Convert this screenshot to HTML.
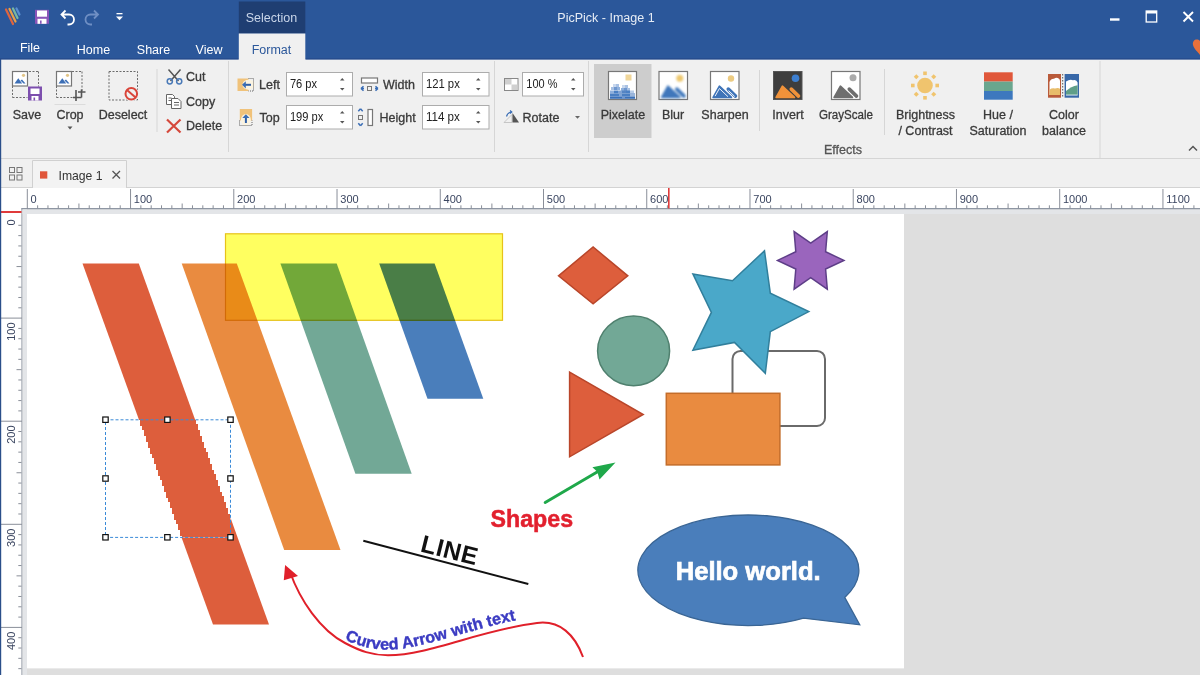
<!DOCTYPE html>
<html><head><meta charset="utf-8">
<style>
html,body{margin:0;padding:0;width:1200px;height:675px;overflow:hidden;background:#f0f0f0;}
svg{position:absolute;left:0;top:0;display:block;}
text{font-family:"Liberation Sans",sans-serif;}
</style></head>
<body>
<svg width="1200" height="675" viewBox="0 0 1200 675">
<!-- title bar -->
<rect x="0" y="0" width="1200" height="59.7" fill="#2b579a"/>
<rect x="0" y="58.3" width="1200" height="1.4" fill="#25498a"/>
<rect x="238.8" y="1.5" width="66.5" height="32" fill="#1f3e72"/>
<rect x="238.8" y="33.5" width="66.5" height="26.5" fill="#f0f0f0"/>
<text x="271.5" y="22" font-size="12.5" fill="#c9d5e9" text-anchor="middle">Selection</text>
<text x="271.5" y="53.5" font-size="12.5" fill="#2b579a" text-anchor="middle">Format</text>
<text x="606" y="21.5" font-size="12.5" fill="#e6ecf5" text-anchor="middle">PicPick - Image 1</text>
<text x="30" y="51.5" font-size="12.5" fill="#ffffff" text-anchor="middle">File</text>
<text x="93.5" y="53.5" font-size="12.5" fill="#ffffff" text-anchor="middle">Home</text>
<text x="153.5" y="53.5" font-size="12.5" fill="#ffffff" text-anchor="middle">Share</text>
<text x="209" y="53.5" font-size="12.5" fill="#ffffff" text-anchor="middle">View</text>
<!-- QAT -->
<g stroke-width="2.2" fill="none" stroke-linecap="round">
 <path d="M6 9.5L13 24" stroke="#e0643e"/>
 <path d="M9.5 9L15.5 21.5" stroke="#e9a048"/>
 <path d="M13 8.5L17.5 18" stroke="#7ab8a0"/>
 <path d="M16.5 8.5L19.5 14.5" stroke="#5a8fd0"/>
</g>
<rect x="35" y="9.8" width="14" height="14" fill="#8a55b8"/>
<rect x="37" y="10.5" width="10" height="6.2" fill="#fff"/>
<rect x="37.5" y="18.8" width="9" height="5" fill="#fff"/>
<rect x="40" y="20.5" width="1.6" height="3.3" fill="#8a55b8"/>
<path d="M61.5 14.5h7.5a5 5 0 0 1 0 10h-1.5M65.5 10.5l-4 4 4 4" stroke="#fff" stroke-width="1.8" fill="none"/>
<path d="M98 14.5h-7.5a5 5 0 0 0 0 10h1.5M94 10.5l4 4-4 4" stroke="#6f8fc4" stroke-width="1.8" fill="none"/>
<rect x="116.5" y="13" width="6" height="1.3" fill="#fff"/>
<path d="M116 16.5h7l-3.5 3.8z" fill="#fff"/>
<!-- window controls -->
<rect x="1110" y="18.3" width="9.5" height="2.4" fill="#fff"/>
<rect x="1146.2" y="11" width="10.5" height="11" fill="none" stroke="#fff" stroke-width="1.3"/>
<rect x="1146" y="11" width="11" height="2.5" fill="#fff"/>
<path d="M1183.5 12l9.5 9.5M1193 12l-9.5 9.5" stroke="#fff" stroke-width="1.9"/>
<path d="M1200 41c-3-3-8-1-7 4c1 4 5 7 7 10z" fill="#e8703a"/>

<!-- ribbon -->
<rect x="0" y="59.7" width="238.8" height="99.3" fill="#f0f0f0"/>
<rect x="305.3" y="59.7" width="894.7" height="99.3" fill="#f0f0f0"/>
<rect x="238.8" y="59" width="66.5" height="100" fill="#f0f0f0"/>
<rect x="0" y="158" width="1200" height="1" fill="#d5d5d5"/>
<!-- ===== RIBBON CONTENT ===== -->
<g id="ribbon">
<!-- separators -->
<rect x="156.5" y="69" width="1" height="63" fill="#d6d6d6"/>
<rect x="228" y="61" width="1" height="91" fill="#d6d6d6"/>
<rect x="494" y="61" width="1" height="91" fill="#d6d6d6"/>
<rect x="588" y="61" width="1" height="91" fill="#d6d6d6"/>
<rect x="759" y="70" width="1" height="61" fill="#d6d6d6"/>
<rect x="884" y="69" width="1" height="66" fill="#d6d6d6"/>
<rect x="1099.5" y="61" width="1" height="97" fill="#d6d6d6"/>

<!-- Save icon -->
<g>
 <path d="M29 71.5h10M38.5 71.5v15M12.5 86v11.5M12.5 97.5h15" stroke="#6b6b6b" stroke-width="1" stroke-dasharray="2 1.5" fill="none"/>
 <rect x="12.5" y="71.5" width="15" height="14.5" fill="#fff" stroke="#777" stroke-width="1.2"/>
 <path d="M14.5 83.5L18.3 78.3L22.2 83.5Z" fill="#3c6fb6"/>
 <path d="M20.5 80.5L22 79.5L25.5 83.5L23.5 83.5Z" fill="#3c6fb6"/>
 <circle cx="23.5" cy="75.3" r="1.6" fill="#e2c588"/>
 <rect x="28" y="86.5" width="14" height="14" fill="#7d4fae"/>
 <rect x="30.5" y="88.5" width="9" height="5.5" fill="#fff"/>
 <rect x="31.5" y="96" width="7" height="4.5" fill="#fff"/>
 <rect x="33.5" y="97.5" width="1.6" height="3" fill="#7d4fae"/>
</g>
<text x="27" y="119" font-size="12.5" fill="#3a3a3a" stroke="#3a3a3a" stroke-width="0.3" text-anchor="middle">Save</text>

<!-- Crop icon -->
<g>
 <path d="M72 71.5h10M82 71.5v20M56.5 86v11.5M56.5 97.5h17" stroke="#6b6b6b" stroke-width="1" stroke-dasharray="2 1.5" fill="none"/>
 <rect x="56.5" y="71.5" width="15" height="14.5" fill="#fff" stroke="#777" stroke-width="1.2"/>
 <path d="M58.5 83.5L62.3 78.3L66.2 83.5Z" fill="#3c6fb6"/>
 <path d="M64.5 80.5L66 79.5L69.5 83.5L67.5 83.5Z" fill="#3c6fb6"/>
 <circle cx="67.5" cy="75.3" r="1.6" fill="#e2c588"/>
 <path d="M76 90v11M73 97.5h8.5M81.5 89.5v8M78 92h7.5" stroke="#555" stroke-width="1.6" fill="none"/>
</g>
<rect x="54.5" y="104" width="31" height="1" fill="#dcdcdc"/>
<text x="70" y="119" font-size="12.5" fill="#3a3a3a" stroke="#3a3a3a" stroke-width="0.3" text-anchor="middle">Crop</text>
<path d="M67.5 126.5h5l-2.5 3z" fill="#555"/>

<!-- Deselect icon -->
<g>
 <rect x="109" y="71.5" width="28.5" height="28.5" fill="none" stroke="#6b6b6b" stroke-width="1" stroke-dasharray="2 1.5"/>
 <circle cx="131.3" cy="93.8" r="7.5" fill="#f0f0f0"/>
 <circle cx="131.3" cy="93.8" r="5.8" fill="none" stroke="#d9453a" stroke-width="2"/>
 <path d="M127 90l8.6 7.6" stroke="#d9453a" stroke-width="2"/>
</g>
<text x="123" y="119" font-size="12.5" fill="#3a3a3a" stroke="#3a3a3a" stroke-width="0.3" text-anchor="middle">Deselect</text>

<!-- Cut / Copy / Delete -->
<g>
 <path d="M168.5 69.5L178.5 81M180.5 69.5L170.5 81" stroke="#555" stroke-width="1.5"/>
 <circle cx="169.8" cy="81.3" r="2.6" fill="none" stroke="#4a7ab8" stroke-width="1.5"/>
 <circle cx="179.2" cy="81.3" r="2.6" fill="none" stroke="#4a7ab8" stroke-width="1.5"/>
</g>
<text x="186" y="81" font-size="12.5" fill="#3a3a3a" stroke="#3a3a3a" stroke-width="0.3">Cut</text>
<g fill="#fff" stroke="#666" stroke-width="1">
 <path d="M166.5 94.5h6l2 2v8h-8z"/>
 <path d="M171.5 98.5h6.5l3 3v7h-9.5z"/>
 <path d="M168.5 98h3M168.5 100.5h3M174 102.5h5M174 105h5" stroke="#666"/>
</g>
<text x="186" y="105.5" font-size="12.5" fill="#3a3a3a" stroke="#3a3a3a" stroke-width="0.3">Copy</text>
<path d="M167 119.5L180.5 132.5M180.5 119.5L167 132.5" stroke="#d5483b" stroke-width="2.2"/>
<text x="186" y="130" font-size="12.5" fill="#3a3a3a" stroke="#3a3a3a" stroke-width="0.3">Delete</text>

<!-- Left / Top -->
<g>
 <rect x="237.5" y="78.5" width="11" height="12.5" fill="#f0c27a"/>
 <ellipse cx="248.5" cy="84.7" rx="6" ry="5" fill="#fbf3e0"/>
 <path d="M248.5 78.5h5v12.5h-5" fill="none" stroke="#555" stroke-width="0.9" stroke-dasharray="1 1"/>
 <path d="M244 84.8h7" stroke="#2f5fa8" stroke-width="2"/>
 <path d="M242 84.8l3.8-3.6v7.2z" fill="#3a6db5"/>
</g>
<text x="259" y="89" font-size="12.5" fill="#3a3a3a" stroke="#3a3a3a" stroke-width="0.3">Left</text>
<g>
 <rect x="239.8" y="109" width="12.3" height="11.5" fill="#f0c27a"/>
 <ellipse cx="245.9" cy="120" rx="5" ry="6" fill="#fbf3e0"/>
 <path d="M239.5 120.5v5h12.5v-5" fill="none" stroke="#555" stroke-width="0.9" stroke-dasharray="1 1"/>
 <path d="M245.9 116.5v6.5" stroke="#2f5fa8" stroke-width="2"/>
 <path d="M245.9 114.2l3.6 3.8h-7.2z" fill="#3a6db5"/>
</g>
<text x="259.5" y="121.5" font-size="12.5" fill="#3a3a3a" stroke="#3a3a3a" stroke-width="0.3">Top</text>

<!-- Input boxes -->
<g fill="#fff" stroke="#acacac" stroke-width="1">
 <rect x="286.5" y="72.5" width="66" height="23.5"/>
 <rect x="286.5" y="105.5" width="66" height="23.5"/>
 <rect x="422.5" y="72.5" width="66.5" height="23.5"/>
 <rect x="422.5" y="105.5" width="66.5" height="23.5"/>
 <rect x="522.5" y="72.5" width="61" height="23.5"/>
</g>
<g font-size="13.5" fill="#222">
 <text x="289.9" y="88" textLength="27.2" lengthAdjust="spacingAndGlyphs">76 px</text>
 <text x="289.9" y="120.8" textLength="33.4" lengthAdjust="spacingAndGlyphs">199 px</text>
 <text x="425.9" y="88" textLength="33.9" lengthAdjust="spacingAndGlyphs">121 px</text>
 <text x="425.9" y="120.8" textLength="33.9" lengthAdjust="spacingAndGlyphs">114 px</text>
 <text x="526.3" y="88" textLength="31.1" lengthAdjust="spacingAndGlyphs">100 %</text>
</g>
<g fill="#555">
 <path d="M340 80.5h4.5l-2.25-2.5z"/><path d="M340 88h4.5l-2.25 2.5z"/>
 <path d="M340 113.5h4.5l-2.25-2.5z"/><path d="M340 121h4.5l-2.25 2.5z"/>
 <path d="M476 80.5h4.5l-2.25-2.5z"/><path d="M476 88h4.5l-2.25 2.5z"/>
 <path d="M476 113.5h4.5l-2.25-2.5z"/><path d="M476 121h4.5l-2.25 2.5z"/>
 <path d="M571 80.5h4.5l-2.25-2.5z"/><path d="M571 88h4.5l-2.25 2.5z"/>
</g>

<!-- Width / Height icons -->
<g>
 <rect x="361.5" y="78" width="16" height="5" fill="#fff" stroke="#777" stroke-width="1.2"/>
 <path d="M361 88.5l2.5-2.2M361 88.5l2.5 2.2M361 88.5h3M378 88.5l-2.5-2.2M378 88.5l-2.5 2.2M378 88.5h-3" stroke="#3a6db5" stroke-width="1.5" fill="none"/>
 <rect x="367.5" y="86.5" width="4" height="4" fill="none" stroke="#777" stroke-width="1"/>
</g>
<text x="383" y="89" font-size="12.5" fill="#3a3a3a" stroke="#3a3a3a" stroke-width="0.3">Width</text>
<g>
 <rect x="368" y="109.5" width="4.5" height="16" fill="#fff" stroke="#777" stroke-width="1.2"/>
 <path d="M360.5 108.8l-2.2 2.5M360.5 108.8l2.2 2.5M360.5 125.8l-2.2-2.5M360.5 125.8l2.2-2.5" stroke="#3a6db5" stroke-width="1.5" fill="none"/>
 <rect x="358.5" y="115.5" width="4" height="4" fill="none" stroke="#777" stroke-width="1"/>
</g>
<text x="379.5" y="122" font-size="12.5" fill="#3a3a3a" stroke="#3a3a3a" stroke-width="0.3">Height</text>

<!-- Zoom / Rotate -->
<g>
 <rect x="504.5" y="78.5" width="13.5" height="12" fill="#fff" stroke="#888" stroke-width="1"/>
 <rect x="505" y="79" width="6.5" height="5.5" fill="#d0d0d0"/>
 <rect x="511.5" y="84.5" width="6" height="5.5" fill="#d0d0d0"/>
</g>
<g>
 <path d="M504 122.5L512 114.5V122.5Z" fill="none" stroke="#bbb" stroke-width="0.8"/>
 <path d="M512.5 122.5L512.5 113L519 122.5Z" fill="#555"/>
 <path d="M506.5 116.5q1-4 5-4.5M510 110.5l1.8 1.5-1.8 1.5" stroke="#3a6db5" stroke-width="1.2" fill="none"/>
</g>
<text x="522.5" y="122" font-size="12.5" fill="#3a3a3a" stroke="#3a3a3a" stroke-width="0.3">Rotate</text>
<path d="M575 116h5l-2.5 2.8z" fill="#666"/>

<!-- Pixelate highlight -->
<rect x="594" y="64" width="57.5" height="74" fill="#cdcdcd"/>
</g>
<rect x="608.5" y="71.5" width="28" height="28" fill="#fff" stroke="#777" stroke-width="1.2"/>
<rect x="625.5" y="74.5" width="6" height="6" fill="#f0d69a"/>
<rect x="613" y="84" width="3" height="3" fill="#c9d8ee"/>
<rect x="616" y="84" width="3" height="3" fill="#a9c1e3"/>
<rect x="622" y="85" width="3" height="3" fill="#c9d8ee"/>
<rect x="625" y="85" width="3" height="3" fill="#a9c1e3"/>
<rect x="611" y="87" width="3" height="3" fill="#a9c1e3"/>
<rect x="614" y="87" width="3" height="3" fill="#6f97cf"/>
<rect x="617" y="87" width="3" height="3" fill="#8fb0dc"/>
<rect x="621" y="88" width="3" height="3" fill="#8fb0dc"/>
<rect x="624" y="88" width="3" height="3" fill="#6f97cf"/>
<rect x="627" y="88" width="3" height="3" fill="#a9c1e3"/>
<rect x="610" y="90.5" width="4" height="3" fill="#8fb0dc"/>
<rect x="614" y="90.5" width="4" height="3" fill="#4a80c4"/>
<rect x="618" y="90.5" width="4" height="3" fill="#7fa3d4"/>
<rect x="622" y="90.5" width="4" height="3" fill="#5585c4"/>
<rect x="626" y="90.5" width="4" height="3" fill="#4a80c4"/>
<rect x="630" y="90.5" width="4" height="3" fill="#b7cce8"/>
<rect x="610" y="93.5" width="25" height="3" fill="#4a7fc2"/>
<rect x="610" y="96.5" width="25" height="2.3" fill="#3a70b8"/>
<rect x="619" y="93.5" width="3" height="3" fill="#7fa3d4"/>
<rect x="630" y="93.5" width="5" height="3" fill="#9bb6da"/>
<rect x="622" y="96.5" width="3" height="2.3" fill="#6f97cf"/>
<text x="623" y="119" font-size="12.5" fill="#3a3a3a" stroke="#3a3a3a" stroke-width="0.3" text-anchor="middle">Pixelate</text>
<defs><filter id="bl" x="-30%" y="-30%" width="160%" height="160%"><feGaussianBlur stdDeviation="1"/></filter></defs>
<rect x="659" y="71.5" width="28.5" height="28" fill="#fff" stroke="#777" stroke-width="1.2"/>
<g filter="url(#bl)"><circle cx="679.8" cy="78.3" r="3.5" fill="#edc870"/><path d="M661.6 97.4L667.9 86.1L680.0 97.4Z" fill="#3f77bb" stroke="#3f77bb" stroke-width="1.6" stroke-linejoin="round"/><path d="M676.8 89.1L684.0 96.1" stroke="#3f77bb" stroke-width="3.6" stroke-linecap="round"/></g>
<text x="673" y="119" font-size="12.5" fill="#3a3a3a" stroke="#3a3a3a" stroke-width="0.3" text-anchor="middle">Blur</text>
<rect x="710.5" y="71.5" width="28.5" height="28" fill="#fff" stroke="#777" stroke-width="1.2"/>
<circle cx="731.0" cy="78.5" r="3.2" fill="#eccb82"/>
<path d="M713.1 97.4L719.4 86.1L731.5 97.4Z" fill="#3f74b8" stroke="#3f74b8" stroke-width="1.6" stroke-linejoin="round"/><path d="M728.3 89.1L735.5 96.1" stroke="#3f74b8" stroke-width="3.6" stroke-linecap="round"/>
<path d="M715.1 96.1L719.4 88.5L728.0 96.7" fill="none" stroke="#fff" stroke-width="0.9"/>
<path d="M728.5 90.5L734.7 96.5" fill="none" stroke="#fff" stroke-width="0.9"/>
<text x="725" y="119" font-size="12.5" fill="#3a3a3a" stroke="#3a3a3a" stroke-width="0.3" text-anchor="middle">Sharpen</text>
<rect x="773.5" y="71.5" width="28.5" height="28" fill="#3e3e3e" stroke="#555" stroke-width="1"/>
<circle cx="795.5" cy="78.3" r="3.8" fill="#3d7fd0"/>
<path d="M791.3 89.1L798.5 96.1" stroke="#f0923a" stroke-width="3.6" stroke-linecap="round"/><path d="M776.1 97.4L782.4 86.1L794.5 97.4Z" fill="#f0923a" stroke="#f0923a" stroke-width="1.6" stroke-linejoin="round"/>
<text x="788" y="119" font-size="12.5" fill="#3a3a3a" stroke="#3a3a3a" stroke-width="0.3" text-anchor="middle">Invert</text>
<rect x="831.5" y="71.5" width="28.5" height="28" fill="#fff" stroke="#777" stroke-width="1.2"/>
<circle cx="853.0" cy="77.8" r="3.5" fill="#aaa"/>
<path d="M834.1 97.4L840.4 86.1L852.5 97.4Z" fill="#6e6e6e" stroke="#6e6e6e" stroke-width="1.6" stroke-linejoin="round"/><path d="M849.3 89.1L856.5 96.1" stroke="#6e6e6e" stroke-width="3.6" stroke-linecap="round"/>
<text x="846" y="119" font-size="12.5" fill="#3a3a3a" stroke="#3a3a3a" stroke-width="0.3" text-anchor="middle" textLength="54" lengthAdjust="spacingAndGlyphs">GrayScale</text>
<text x="843" y="153.5" font-size="12.5" fill="#555" stroke="#555" stroke-width="0.3" text-anchor="middle">Effects</text>
<!-- Brightness -->
<g fill="#f0c46e">
 <circle cx="925" cy="85.5" r="7.8"/>
 <rect x="923.2" y="71.5" width="3.6" height="3.6"/>
 <rect x="923.2" y="96" width="3.6" height="3.6"/>
 <rect x="911" y="83.7" width="3.6" height="3.6"/>
 <rect x="935.4" y="83.7" width="3.6" height="3.6"/>
 <rect x="914.5" y="75" width="3.6" height="3.6" transform="rotate(45 916.3 76.8)"/>
 <rect x="931.9" y="75" width="3.6" height="3.6" transform="rotate(45 933.7 76.8)"/>
 <rect x="914.5" y="92.4" width="3.6" height="3.6" transform="rotate(45 916.3 94.2)"/>
 <rect x="931.9" y="92.4" width="3.6" height="3.6" transform="rotate(45 933.7 94.2)"/>
</g>
<text x="925.5" y="119" font-size="12.5" fill="#3a3a3a" stroke="#3a3a3a" stroke-width="0.3" text-anchor="middle">Brightness</text>
<text x="925.5" y="134.5" font-size="12.5" fill="#3a3a3a" stroke="#3a3a3a" stroke-width="0.3" text-anchor="middle">/ Contrast</text>

<!-- Hue -->
<rect x="984" y="72.3" width="28.7" height="9.3" fill="#e0573a"/>
<rect x="984" y="81.6" width="28.7" height="9.4" fill="#6aa68e"/>
<rect x="984" y="91" width="28.7" height="8.7" fill="#3d78be"/>
<text x="998" y="119" font-size="12.5" fill="#3a3a3a" stroke="#3a3a3a" stroke-width="0.3" text-anchor="middle">Hue /</text>
<text x="998" y="134.5" font-size="12.5" fill="#3a3a3a" stroke="#3a3a3a" stroke-width="0.3" text-anchor="middle">Saturation</text>

<!-- Color balance -->
<g>
 <rect x="1048" y="74" width="13" height="23.7" fill="#b95a3a"/>
 <path d="M1049.5 95V82Q1051 78.5 1054 78.8Q1056.5 76.5 1059 78.8Q1060 79.5 1060 81V95Z" fill="#fff"/>
 <path d="M1049.5 95V89.8Q1052 87.8 1055 88.6Q1058 87.2 1060 88.8V95Z" fill="#e8bc6a"/>
 <rect x="1064.6" y="74" width="14.4" height="23.7" fill="#3868a8"/>
 <path d="M1066 95V81.5Q1070 78.8 1073 80.2Q1076.5 79.2 1077.6 82.5V95Z" fill="#fff"/>
 <path d="M1066 95V91Q1071 86.2 1077.6 85.2V95Z" fill="#5f9e88"/>
 <rect x="1066" y="94.6" width="11.6" height="0.9" fill="#e8f2f8"/>
 <path d="M1062.7 74v24" stroke="#555" stroke-width="1" stroke-dasharray="1.5 1.5"/>
</g>
<text x="1064" y="119" font-size="12.5" fill="#3a3a3a" stroke="#3a3a3a" stroke-width="0.3" text-anchor="middle">Color</text>
<text x="1064" y="134.5" font-size="12.5" fill="#3a3a3a" stroke="#3a3a3a" stroke-width="0.3" text-anchor="middle">balance</text>

<!-- collapse chevron -->
<path d="M1189 150.5l4-4 4 4" stroke="#555" stroke-width="1.5" fill="none"/>
<!-- tab bar -->
<rect x="0" y="159" width="1200" height="29" fill="#f0f0f0"/>
<rect x="0" y="187" width="1200" height="1" fill="#d3d3d3"/>
<g fill="none" stroke="#777" stroke-width="1">
 <rect x="9.5" y="167.5" width="5" height="5"/>
 <rect x="17" y="167.5" width="5" height="5"/>
 <rect x="9.5" y="175" width="5" height="5"/>
 <rect x="17" y="175" width="5" height="5"/>
</g>
<path d="M32.5 188V160.5H126.5V188" fill="#f3f3f3" stroke="#d0d0d0" stroke-width="1"/>
<rect x="40" y="171.3" width="7.3" height="7.3" fill="#e0553a"/>
<text x="58.5" y="180" font-size="12.2" fill="#333">Image 1</text>
<path d="M112.5 171l7.5 7.5M120 171l-7.5 7.5" stroke="#555" stroke-width="1.3"/>

<!-- rulers -->
<rect x="0" y="188" width="1200" height="20.5" fill="#ffffff"/>
<rect x="0" y="208.5" width="1200" height="466.5" fill="#dedede"/>
<rect x="1" y="188" width="20.5" height="487" fill="#ffffff"/>
<rect x="21.5" y="208" width="1178.5" height="1.5" fill="#8e96a3"/>
<rect x="21.5" y="208" width="1" height="467" fill="#8e96a3"/>
<rect x="22.5" y="209.5" width="1177.5" height="4.5" fill="#e3e5e8"/>
<rect x="22.5" y="209.5" width="4.5" height="466" fill="#e3e5e8"/>
<rect x="26.80" y="189" width="1" height="20" fill="#8a8f99"/>
<text x="30.60" y="203.3" font-size="11" fill="#3a4560">0</text>
<rect x="37.12" y="205.3" width="1" height="3.2" fill="#8a8f99"/>
<rect x="47.45" y="205.3" width="1" height="3.2" fill="#8a8f99"/>
<rect x="57.77" y="205.3" width="1" height="3.2" fill="#8a8f99"/>
<rect x="68.10" y="205.3" width="1" height="3.2" fill="#8a8f99"/>
<rect x="78.42" y="203.5" width="1" height="5" fill="#8a8f99"/>
<rect x="88.74" y="205.3" width="1" height="3.2" fill="#8a8f99"/>
<rect x="99.07" y="205.3" width="1" height="3.2" fill="#8a8f99"/>
<rect x="109.39" y="205.3" width="1" height="3.2" fill="#8a8f99"/>
<rect x="119.72" y="205.3" width="1" height="3.2" fill="#8a8f99"/>
<rect x="130.04" y="189" width="1" height="20" fill="#8a8f99"/>
<text x="133.84" y="203.3" font-size="11" fill="#3a4560">100</text>
<rect x="140.36" y="205.3" width="1" height="3.2" fill="#8a8f99"/>
<rect x="150.69" y="205.3" width="1" height="3.2" fill="#8a8f99"/>
<rect x="161.01" y="205.3" width="1" height="3.2" fill="#8a8f99"/>
<rect x="171.34" y="205.3" width="1" height="3.2" fill="#8a8f99"/>
<rect x="181.66" y="203.5" width="1" height="5" fill="#8a8f99"/>
<rect x="191.98" y="205.3" width="1" height="3.2" fill="#8a8f99"/>
<rect x="202.31" y="205.3" width="1" height="3.2" fill="#8a8f99"/>
<rect x="212.63" y="205.3" width="1" height="3.2" fill="#8a8f99"/>
<rect x="222.96" y="205.3" width="1" height="3.2" fill="#8a8f99"/>
<rect x="233.28" y="189" width="1" height="20" fill="#8a8f99"/>
<text x="237.08" y="203.3" font-size="11" fill="#3a4560">200</text>
<rect x="243.60" y="205.3" width="1" height="3.2" fill="#8a8f99"/>
<rect x="253.93" y="205.3" width="1" height="3.2" fill="#8a8f99"/>
<rect x="264.25" y="205.3" width="1" height="3.2" fill="#8a8f99"/>
<rect x="274.58" y="205.3" width="1" height="3.2" fill="#8a8f99"/>
<rect x="284.90" y="203.5" width="1" height="5" fill="#8a8f99"/>
<rect x="295.22" y="205.3" width="1" height="3.2" fill="#8a8f99"/>
<rect x="305.55" y="205.3" width="1" height="3.2" fill="#8a8f99"/>
<rect x="315.87" y="205.3" width="1" height="3.2" fill="#8a8f99"/>
<rect x="326.20" y="205.3" width="1" height="3.2" fill="#8a8f99"/>
<rect x="336.52" y="189" width="1" height="20" fill="#8a8f99"/>
<text x="340.32" y="203.3" font-size="11" fill="#3a4560">300</text>
<rect x="346.84" y="205.3" width="1" height="3.2" fill="#8a8f99"/>
<rect x="357.17" y="205.3" width="1" height="3.2" fill="#8a8f99"/>
<rect x="367.49" y="205.3" width="1" height="3.2" fill="#8a8f99"/>
<rect x="377.82" y="205.3" width="1" height="3.2" fill="#8a8f99"/>
<rect x="388.14" y="203.5" width="1" height="5" fill="#8a8f99"/>
<rect x="398.46" y="205.3" width="1" height="3.2" fill="#8a8f99"/>
<rect x="408.79" y="205.3" width="1" height="3.2" fill="#8a8f99"/>
<rect x="419.11" y="205.3" width="1" height="3.2" fill="#8a8f99"/>
<rect x="429.44" y="205.3" width="1" height="3.2" fill="#8a8f99"/>
<rect x="439.76" y="189" width="1" height="20" fill="#8a8f99"/>
<text x="443.56" y="203.3" font-size="11" fill="#3a4560">400</text>
<rect x="450.08" y="205.3" width="1" height="3.2" fill="#8a8f99"/>
<rect x="460.41" y="205.3" width="1" height="3.2" fill="#8a8f99"/>
<rect x="470.73" y="205.3" width="1" height="3.2" fill="#8a8f99"/>
<rect x="481.06" y="205.3" width="1" height="3.2" fill="#8a8f99"/>
<rect x="491.38" y="203.5" width="1" height="5" fill="#8a8f99"/>
<rect x="501.70" y="205.3" width="1" height="3.2" fill="#8a8f99"/>
<rect x="512.03" y="205.3" width="1" height="3.2" fill="#8a8f99"/>
<rect x="522.35" y="205.3" width="1" height="3.2" fill="#8a8f99"/>
<rect x="532.68" y="205.3" width="1" height="3.2" fill="#8a8f99"/>
<rect x="543.00" y="189" width="1" height="20" fill="#8a8f99"/>
<text x="546.80" y="203.3" font-size="11" fill="#3a4560">500</text>
<rect x="553.32" y="205.3" width="1" height="3.2" fill="#8a8f99"/>
<rect x="563.65" y="205.3" width="1" height="3.2" fill="#8a8f99"/>
<rect x="573.97" y="205.3" width="1" height="3.2" fill="#8a8f99"/>
<rect x="584.30" y="205.3" width="1" height="3.2" fill="#8a8f99"/>
<rect x="594.62" y="203.5" width="1" height="5" fill="#8a8f99"/>
<rect x="604.94" y="205.3" width="1" height="3.2" fill="#8a8f99"/>
<rect x="615.27" y="205.3" width="1" height="3.2" fill="#8a8f99"/>
<rect x="625.59" y="205.3" width="1" height="3.2" fill="#8a8f99"/>
<rect x="635.92" y="205.3" width="1" height="3.2" fill="#8a8f99"/>
<rect x="646.24" y="189" width="1" height="20" fill="#8a8f99"/>
<text x="650.04" y="203.3" font-size="11" fill="#3a4560">600</text>
<rect x="656.56" y="205.3" width="1" height="3.2" fill="#8a8f99"/>
<rect x="666.89" y="205.3" width="1" height="3.2" fill="#8a8f99"/>
<rect x="677.21" y="205.3" width="1" height="3.2" fill="#8a8f99"/>
<rect x="687.54" y="205.3" width="1" height="3.2" fill="#8a8f99"/>
<rect x="697.86" y="203.5" width="1" height="5" fill="#8a8f99"/>
<rect x="708.18" y="205.3" width="1" height="3.2" fill="#8a8f99"/>
<rect x="718.51" y="205.3" width="1" height="3.2" fill="#8a8f99"/>
<rect x="728.83" y="205.3" width="1" height="3.2" fill="#8a8f99"/>
<rect x="739.16" y="205.3" width="1" height="3.2" fill="#8a8f99"/>
<rect x="749.48" y="189" width="1" height="20" fill="#8a8f99"/>
<text x="753.28" y="203.3" font-size="11" fill="#3a4560">700</text>
<rect x="759.80" y="205.3" width="1" height="3.2" fill="#8a8f99"/>
<rect x="770.13" y="205.3" width="1" height="3.2" fill="#8a8f99"/>
<rect x="780.45" y="205.3" width="1" height="3.2" fill="#8a8f99"/>
<rect x="790.78" y="205.3" width="1" height="3.2" fill="#8a8f99"/>
<rect x="801.10" y="203.5" width="1" height="5" fill="#8a8f99"/>
<rect x="811.42" y="205.3" width="1" height="3.2" fill="#8a8f99"/>
<rect x="821.75" y="205.3" width="1" height="3.2" fill="#8a8f99"/>
<rect x="832.07" y="205.3" width="1" height="3.2" fill="#8a8f99"/>
<rect x="842.40" y="205.3" width="1" height="3.2" fill="#8a8f99"/>
<rect x="852.72" y="189" width="1" height="20" fill="#8a8f99"/>
<text x="856.52" y="203.3" font-size="11" fill="#3a4560">800</text>
<rect x="863.04" y="205.3" width="1" height="3.2" fill="#8a8f99"/>
<rect x="873.37" y="205.3" width="1" height="3.2" fill="#8a8f99"/>
<rect x="883.69" y="205.3" width="1" height="3.2" fill="#8a8f99"/>
<rect x="894.02" y="205.3" width="1" height="3.2" fill="#8a8f99"/>
<rect x="904.34" y="203.5" width="1" height="5" fill="#8a8f99"/>
<rect x="914.66" y="205.3" width="1" height="3.2" fill="#8a8f99"/>
<rect x="924.99" y="205.3" width="1" height="3.2" fill="#8a8f99"/>
<rect x="935.31" y="205.3" width="1" height="3.2" fill="#8a8f99"/>
<rect x="945.64" y="205.3" width="1" height="3.2" fill="#8a8f99"/>
<rect x="955.96" y="189" width="1" height="20" fill="#8a8f99"/>
<text x="959.76" y="203.3" font-size="11" fill="#3a4560">900</text>
<rect x="966.28" y="205.3" width="1" height="3.2" fill="#8a8f99"/>
<rect x="976.61" y="205.3" width="1" height="3.2" fill="#8a8f99"/>
<rect x="986.93" y="205.3" width="1" height="3.2" fill="#8a8f99"/>
<rect x="997.26" y="205.3" width="1" height="3.2" fill="#8a8f99"/>
<rect x="1007.58" y="203.5" width="1" height="5" fill="#8a8f99"/>
<rect x="1017.90" y="205.3" width="1" height="3.2" fill="#8a8f99"/>
<rect x="1028.23" y="205.3" width="1" height="3.2" fill="#8a8f99"/>
<rect x="1038.55" y="205.3" width="1" height="3.2" fill="#8a8f99"/>
<rect x="1048.88" y="205.3" width="1" height="3.2" fill="#8a8f99"/>
<rect x="1059.20" y="189" width="1" height="20" fill="#8a8f99"/>
<text x="1063.00" y="203.3" font-size="11" fill="#3a4560">1000</text>
<rect x="1069.52" y="205.3" width="1" height="3.2" fill="#8a8f99"/>
<rect x="1079.85" y="205.3" width="1" height="3.2" fill="#8a8f99"/>
<rect x="1090.17" y="205.3" width="1" height="3.2" fill="#8a8f99"/>
<rect x="1100.50" y="205.3" width="1" height="3.2" fill="#8a8f99"/>
<rect x="1110.82" y="203.5" width="1" height="5" fill="#8a8f99"/>
<rect x="1121.14" y="205.3" width="1" height="3.2" fill="#8a8f99"/>
<rect x="1131.47" y="205.3" width="1" height="3.2" fill="#8a8f99"/>
<rect x="1141.79" y="205.3" width="1" height="3.2" fill="#8a8f99"/>
<rect x="1152.12" y="205.3" width="1" height="3.2" fill="#8a8f99"/>
<rect x="1162.44" y="189" width="1" height="20" fill="#8a8f99"/>
<text x="1166.24" y="203.3" font-size="11" fill="#3a4560">1100</text>
<rect x="1172.76" y="205.3" width="1" height="3.2" fill="#8a8f99"/>
<rect x="1183.09" y="205.3" width="1" height="3.2" fill="#8a8f99"/>
<rect x="1193.41" y="205.3" width="1" height="3.2" fill="#8a8f99"/>
<text transform="translate(14.8 219.30) rotate(-90)" text-anchor="end" font-size="11" fill="#3a4560">0</text>
<rect x="18.3" y="224.81" width="3.2" height="1" fill="#8a8f99"/>
<rect x="18.3" y="235.12" width="3.2" height="1" fill="#8a8f99"/>
<rect x="18.3" y="245.43" width="3.2" height="1" fill="#8a8f99"/>
<rect x="18.3" y="255.74" width="3.2" height="1" fill="#8a8f99"/>
<rect x="16.5" y="266.05" width="5" height="1" fill="#8a8f99"/>
<rect x="18.3" y="276.36" width="3.2" height="1" fill="#8a8f99"/>
<rect x="18.3" y="286.67" width="3.2" height="1" fill="#8a8f99"/>
<rect x="18.3" y="296.98" width="3.2" height="1" fill="#8a8f99"/>
<rect x="18.3" y="307.29" width="3.2" height="1" fill="#8a8f99"/>
<rect x="1" y="317.60" width="21" height="1" fill="#8a8f99"/>
<text transform="translate(14.8 322.40) rotate(-90)" text-anchor="end" font-size="11" fill="#3a4560">100</text>
<rect x="18.3" y="327.91" width="3.2" height="1" fill="#8a8f99"/>
<rect x="18.3" y="338.22" width="3.2" height="1" fill="#8a8f99"/>
<rect x="18.3" y="348.53" width="3.2" height="1" fill="#8a8f99"/>
<rect x="18.3" y="358.84" width="3.2" height="1" fill="#8a8f99"/>
<rect x="16.5" y="369.15" width="5" height="1" fill="#8a8f99"/>
<rect x="18.3" y="379.46" width="3.2" height="1" fill="#8a8f99"/>
<rect x="18.3" y="389.77" width="3.2" height="1" fill="#8a8f99"/>
<rect x="18.3" y="400.08" width="3.2" height="1" fill="#8a8f99"/>
<rect x="18.3" y="410.39" width="3.2" height="1" fill="#8a8f99"/>
<rect x="1" y="420.70" width="21" height="1" fill="#8a8f99"/>
<text transform="translate(14.8 425.50) rotate(-90)" text-anchor="end" font-size="11" fill="#3a4560">200</text>
<rect x="18.3" y="431.01" width="3.2" height="1" fill="#8a8f99"/>
<rect x="18.3" y="441.32" width="3.2" height="1" fill="#8a8f99"/>
<rect x="18.3" y="451.63" width="3.2" height="1" fill="#8a8f99"/>
<rect x="18.3" y="461.94" width="3.2" height="1" fill="#8a8f99"/>
<rect x="16.5" y="472.25" width="5" height="1" fill="#8a8f99"/>
<rect x="18.3" y="482.56" width="3.2" height="1" fill="#8a8f99"/>
<rect x="18.3" y="492.87" width="3.2" height="1" fill="#8a8f99"/>
<rect x="18.3" y="503.18" width="3.2" height="1" fill="#8a8f99"/>
<rect x="18.3" y="513.49" width="3.2" height="1" fill="#8a8f99"/>
<rect x="1" y="523.80" width="21" height="1" fill="#8a8f99"/>
<text transform="translate(14.8 528.60) rotate(-90)" text-anchor="end" font-size="11" fill="#3a4560">300</text>
<rect x="18.3" y="534.11" width="3.2" height="1" fill="#8a8f99"/>
<rect x="18.3" y="544.42" width="3.2" height="1" fill="#8a8f99"/>
<rect x="18.3" y="554.73" width="3.2" height="1" fill="#8a8f99"/>
<rect x="18.3" y="565.04" width="3.2" height="1" fill="#8a8f99"/>
<rect x="16.5" y="575.35" width="5" height="1" fill="#8a8f99"/>
<rect x="18.3" y="585.66" width="3.2" height="1" fill="#8a8f99"/>
<rect x="18.3" y="595.97" width="3.2" height="1" fill="#8a8f99"/>
<rect x="18.3" y="606.28" width="3.2" height="1" fill="#8a8f99"/>
<rect x="18.3" y="616.59" width="3.2" height="1" fill="#8a8f99"/>
<rect x="1" y="626.90" width="21" height="1" fill="#8a8f99"/>
<text transform="translate(14.8 631.70) rotate(-90)" text-anchor="end" font-size="11" fill="#3a4560">400</text>
<rect x="18.3" y="637.21" width="3.2" height="1" fill="#8a8f99"/>
<rect x="18.3" y="647.52" width="3.2" height="1" fill="#8a8f99"/>
<rect x="18.3" y="657.83" width="3.2" height="1" fill="#8a8f99"/>
<rect x="18.3" y="668.14" width="3.2" height="1" fill="#8a8f99"/><!-- canvas -->
<rect x="27" y="214" width="877" height="454.6" fill="#ffffff"/>
<rect x="904" y="214" width="296" height="461" fill="#dedede"/>
<rect x="27" y="668.6" width="877" height="7" fill="#dedede"/>
<rect x="668" y="188" width="1.6" height="20.5" fill="#e03a3a"/>
<rect x="1" y="211" width="20.5" height="2" fill="#e03a3a"/>

<!-- stripes -->
<path d="M82.5 263.5H138.8L269 624.6H213Z" fill="#dd5e3c"/>
<path d="M181.7 263.5H236.8L340.5 550H284.2Z" fill="#e98b40"/>
<path d="M280.4 263.5H336.7L411.7 473.8H355.4Z" fill="#72a896"/>
<path d="M379.2 263.5H434.6L483.3 398.8H427.5Z" fill="#4a7ebb"/>
<g style="mix-blend-mode:multiply">
<rect x="225.5" y="233.8" width="277" height="86.5" fill="#ffff60" stroke="#e6c21a" stroke-width="1.2"/>
</g>

<!-- selection box -->
<rect x="105.5" y="420" width="125" height="117.4" fill="#fff"/>
<g fill="#dd5e3c" shape-rendering="crispEdges"><rect x="140" y="420.0" width="56" height="2.05"/><rect x="140" y="422.0" width="56" height="2.05"/><rect x="140" y="424.0" width="58" height="2.05"/><rect x="142" y="426.0" width="56" height="2.05"/><rect x="142" y="428.0" width="56" height="2.05"/><rect x="144" y="430.0" width="56" height="2.05"/><rect x="144" y="432.0" width="56" height="2.05"/><rect x="144" y="434.0" width="56" height="2.05"/><rect x="146" y="436.0" width="56" height="2.05"/><rect x="146" y="438.0" width="56" height="2.05"/><rect x="146" y="440.0" width="56" height="2.05"/><rect x="148" y="442.0" width="56" height="2.05"/><rect x="148" y="444.0" width="56" height="2.05"/><rect x="148" y="446.0" width="56" height="2.05"/><rect x="150" y="448.0" width="56" height="2.05"/><rect x="150" y="450.0" width="56" height="2.05"/><rect x="150" y="452.0" width="58" height="2.05"/><rect x="152" y="454.0" width="56" height="2.05"/><rect x="152" y="456.0" width="56" height="2.05"/><rect x="154" y="458.0" width="56" height="2.05"/><rect x="154" y="460.0" width="56" height="2.05"/><rect x="154" y="462.0" width="56" height="2.05"/><rect x="156" y="464.0" width="56" height="2.05"/><rect x="156" y="466.0" width="56" height="2.05"/><rect x="156" y="468.0" width="56" height="2.05"/><rect x="158" y="470.0" width="56" height="2.05"/><rect x="158" y="472.0" width="56" height="2.05"/><rect x="158" y="474.0" width="58" height="2.05"/><rect x="160" y="476.0" width="56" height="2.05"/><rect x="160" y="478.0" width="56" height="2.05"/><rect x="162" y="480.0" width="56" height="2.05"/><rect x="162" y="482.0" width="56" height="2.05"/><rect x="162" y="484.0" width="56" height="2.05"/><rect x="164" y="486.0" width="56" height="2.05"/><rect x="164" y="488.0" width="56" height="2.05"/><rect x="164" y="490.0" width="56" height="2.05"/><rect x="166" y="492.0" width="56" height="2.05"/><rect x="166" y="494.0" width="56" height="2.05"/><rect x="166" y="496.0" width="58" height="2.05"/><rect x="168" y="498.0" width="56" height="2.05"/><rect x="168" y="500.0" width="56" height="2.05"/><rect x="170" y="502.0" width="56" height="2.05"/><rect x="170" y="504.0" width="56" height="2.05"/><rect x="170" y="506.0" width="56" height="2.05"/><rect x="172" y="508.0" width="56" height="2.05"/><rect x="172" y="510.0" width="56" height="2.05"/><rect x="172" y="512.0" width="56" height="2.05"/><rect x="174" y="514.0" width="56" height="2.05"/><rect x="174" y="516.0" width="56" height="2.05"/><rect x="174" y="518.0" width="56" height="2.05"/><rect x="176" y="520.0" width="54.5" height="2.05"/><rect x="176" y="522.0" width="54.5" height="2.05"/><rect x="178" y="524.0" width="52.5" height="2.05"/><rect x="178" y="526.0" width="52.5" height="2.05"/><rect x="178" y="528.0" width="52.5" height="2.05"/><rect x="180" y="530.0" width="50.5" height="2.05"/><rect x="180" y="532.0" width="50.5" height="2.05"/><rect x="180" y="534.0" width="50.5" height="2.05"/><rect x="182" y="536.0" width="48.5" height="1.45"/></g>
<rect x="105.5" y="419.8" width="125" height="117.6" fill="none" stroke="#3a8ad8" stroke-width="1" stroke-dasharray="3 2"/>
<g fill="#fff" stroke="#111" stroke-width="1.2">
 <rect x="102.8" y="417" width="5.4" height="5.4"/>
 <rect x="164.7" y="417" width="5.4" height="5.4"/>
 <rect x="227.8" y="417" width="5.4" height="5.4"/>
 <rect x="102.8" y="475.8" width="5.4" height="5.4"/>
 <rect x="227.8" y="475.8" width="5.4" height="5.4"/>
 <rect x="102.8" y="534.6" width="5.4" height="5.4"/>
 <rect x="164.7" y="534.6" width="5.4" height="5.4"/>
 <rect x="227.8" y="534.6" width="5.4" height="5.4"/>
</g>

<!-- shapes -->
<path d="M558.5 275.8L593.1 247L627.8 275.8L593.1 303.9Z" fill="#dd5e3c" stroke="#b9462a" stroke-width="1.5"/>
<ellipse cx="633.6" cy="350.9" rx="36" ry="34.8" fill="#72a896" stroke="#4f806e" stroke-width="1.5"/>
<path d="M569.6 372.1L643.2 414.5L569.6 456.8Z" fill="#dd5e3c" stroke="#b9462a" stroke-width="1.5"/>
<rect x="732.5" y="350.9" width="92.5" height="75.1" rx="8" ry="8" fill="none" stroke="#6a6a6a" stroke-width="2"/>
<rect x="666.3" y="393.3" width="113.6" height="71.6" fill="#e98b40" stroke="#c46d2a" stroke-width="1.5"/>
<path d="M764.5 250.8L770.3 293.2L808.8 311.6L770.3 331.7L765.3 373.3L734.5 342.4L692.9 350.2L711.4 312.4L692.9 273.9L732.5 280.8Z" fill="#4aa8c9" stroke="#317f9c" stroke-width="1.5"/>
<path d="M843.9 260.4L825.6 251.8L827.3 231.6L810.7 243.2L794.1 231.6L795.8 251.8L777.5 260.4L795.8 269.0L794.1 289.2L810.7 277.6L827.3 289.2L825.6 269.0Z" fill="#9a65bd" stroke="#5e3e88" stroke-width="1.5"/>

<!-- green arrow -->
<path d="M545.2 502.5L598 471.5" stroke="#1fa84a" stroke-width="3" stroke-linecap="round"/>
<path d="M615.5 462.5L592.4 467.3L597.3 471.8L599.5 479.4Z" fill="#1fa84a"/>
<text x="531.8" y="526.7" font-size="23.2" font-weight="bold" fill="#e2202e" stroke="#e2202e" stroke-width="0.5" text-anchor="middle">Shapes</text>

<!-- line -->
<path d="M363.3 540.7L528.3 584" stroke="#111" stroke-width="2"/>
<text transform="translate(447.8 558.3) rotate(14)" font-size="24.5" font-weight="bold" letter-spacing="0.6" fill="#111" text-anchor="middle">LINE</text>

<!-- curved arrow -->
<path d="M290 572C300 600 320 630 345 643C360 651 372 655.3 388 655.3C430 655 480 630 537 623C560 620 575 635 583 657" fill="none" stroke="#e0202a" stroke-width="2"/>
<path d="M285.1 565.1L283.8 580.3L298 576.1Z" fill="#e0202a"/>
<path id="cpath" d="M335 634C355 646 372 650 390 649.5C430 648 480 624 545 615" fill="none"/>
<text font-size="16.2" font-weight="bold" fill="#3b3bc2" stroke="#3b3bc2" stroke-width="0.4"><textPath href="#cpath" startOffset="11">Curved Arrow with text</textPath></text>
<!-- speech bubble -->
<path d="M844.7 597.4A110.5 55.3 0 1 0 803.6 618.2L859.7 624.8Z" fill="#4a7ebb" stroke="#3a6594" stroke-width="1.3"/>
<text x="748.2" y="580" font-size="25.6" font-weight="bold" fill="#fff" stroke="#fff" stroke-width="0.7" text-anchor="middle">Hello world.</text>

<!-- left window border -->
<rect x="0" y="59" width="1.2" height="616" fill="#2b4f8a"/>
</svg>
</body></html>
